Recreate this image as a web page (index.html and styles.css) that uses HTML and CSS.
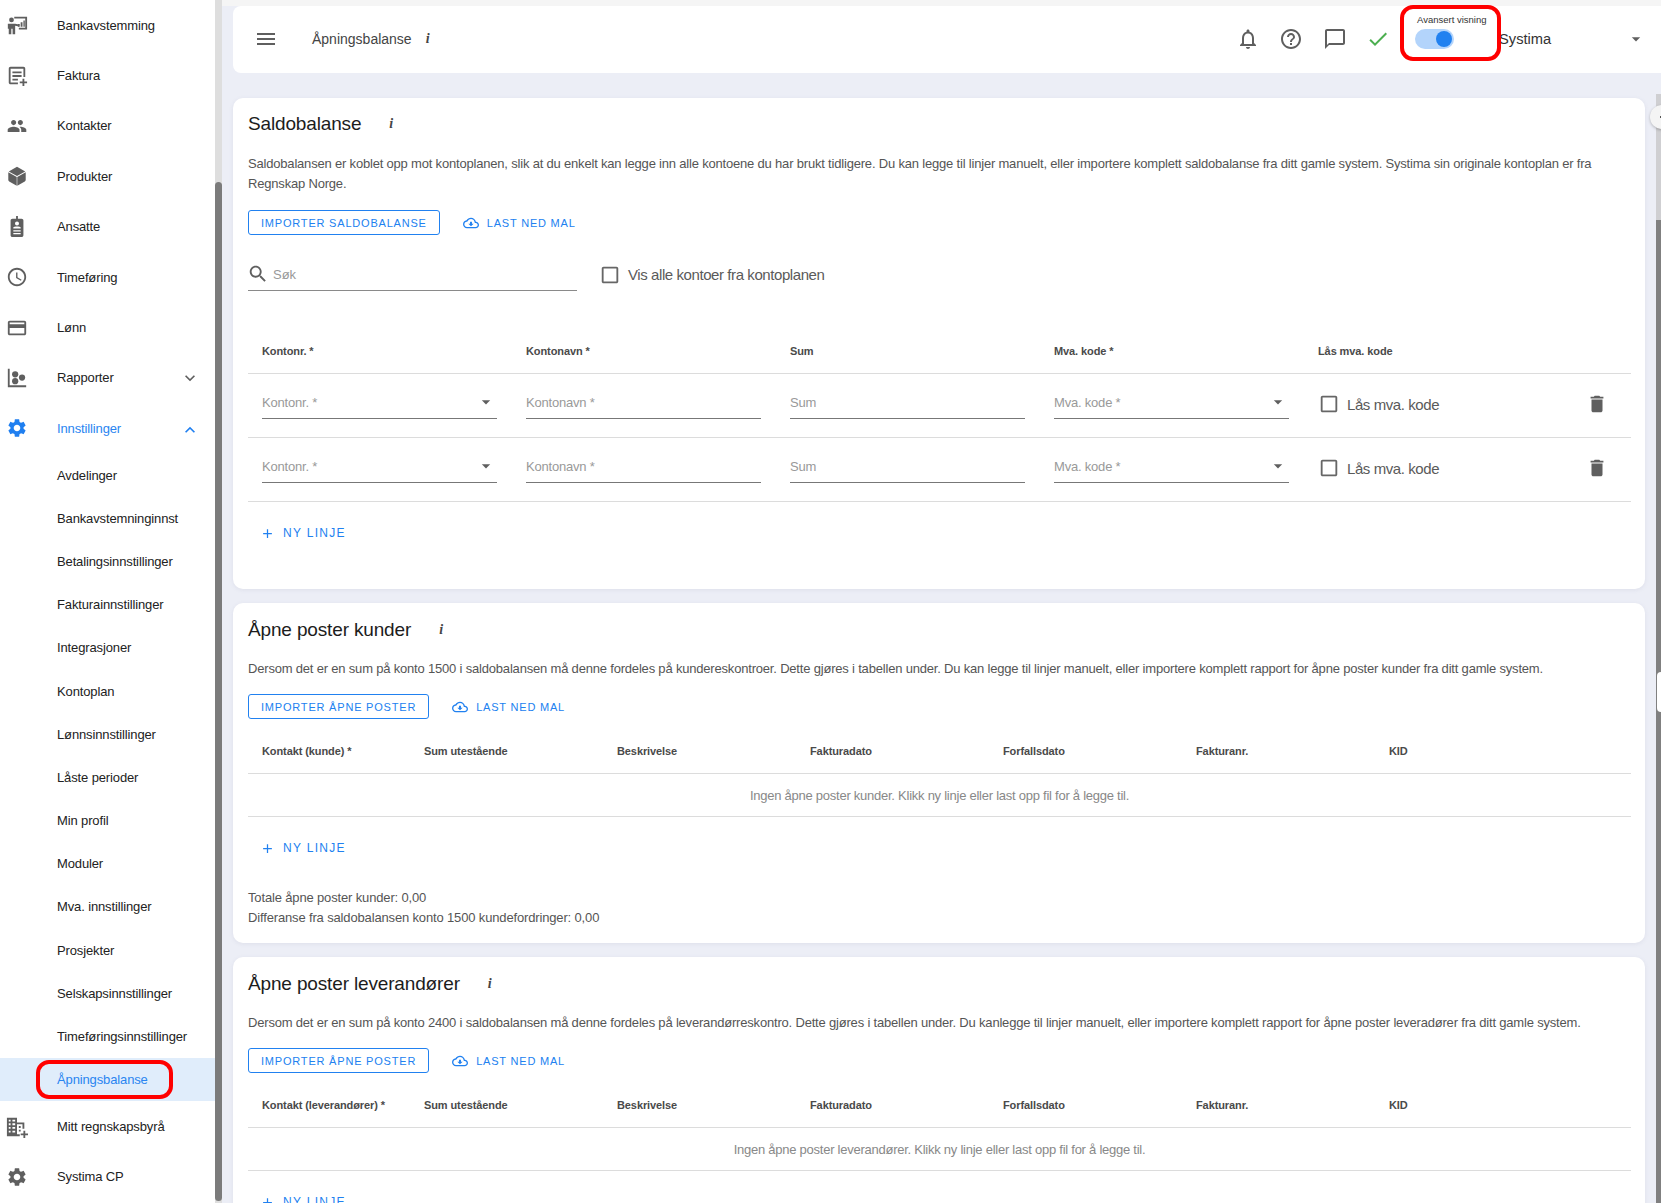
FILE: index.html
```html
<!DOCTYPE html>
<html lang="no">
<head>
<meta charset="utf-8">
<title>Åpningsbalanse</title>
<link rel="stylesheet" href="styles.css">
</head>
<body>
<svg class="defs" aria-hidden="true">
  <symbol id="i-bank" viewBox="0 0 24 24"><path d="M9 3h14v14h-9v-2h7V5H9z"/><path d="M13 11h2v3h-2zM16 9h2v5h-2zM19 7h1.500v7H19z"/><circle cx="6" cy="6.500" r="2.600"/><path d="M2 10.500h8l4 1v2l-4-.6V22H7.200v-6H5.800v6H3v-6H2z"/></symbol>
  <symbol id="i-invoice" viewBox="0 0 24 24"><path d="M5 2h14c1.100 0 2 .9 2 2v9h-2V4H5v15h8v2H5c-1.100 0-2-.9-2-2V4c0-1.100.9-2 2-2z"/><path d="M7 7h10v2H7zM7 11h10v2H7zM7 15h6v2H7zM18 15h2v3h3v2h-3v3h-2v-3h-3v-2h3z"/></symbol>
  <symbol id="i-people" viewBox="-1 -1 26 26"><path d="M16 11c1.660 0 2.990-1.340 2.990-3S17.660 5 16 5c-1.660 0-3 1.340-3 3s1.340 3 3 3zm-8 0c1.660 0 2.990-1.340 2.990-3S9.660 5 8 5C6.340 5 5 6.340 5 8s1.340 3 3 3zm0 2c-2.330 0-7 1.170-7 3.500V19h14v-2.500c0-2.330-4.670-3.500-7-3.500zm8 0c-.29 0-.62.02-.97.05 1.160.84 1.970 1.970 1.970 3.450V19h6v-2.500c0-2.330-4.670-3.500-7-3.500z"/></symbol>
  <symbol id="i-box" viewBox="0 0 24 24"><path d="M12 2l9 5-9 5-9-5z"/><path d="M2.500 8l9.200 5.100V22.500L3.500 18c-.6-.3-1-.9-1-1.600zM21.500 8l-9.200 5.100V22.500l8.200-4.500c.6-.3 1-.9 1-1.600z"/></symbol>
  <symbol id="i-badge" viewBox="0 0 24 24"><path fill-rule="evenodd" d="M11 0h2v3h4c1.100 0 2 .9 2 2v16c0 1.100-.9 2-2 2H7c-1.100 0-2-.9-2-2V5c0-1.100.9-2 2-2h4zm1 6a2.200 2.200 0 100 4.400A2.200 2.200 0 0012 6zM8 12.500v1.200h8v-1.200c0-.5-2.500-1-4-1s-4 .5-4 1zM8 15.500V17h8v-1.500zM8 18.500V20h8v-1.500z"/></symbol>
  <symbol id="i-clock" viewBox="0 0 24 24"><path d="M11.990 2C6.470 2 2 6.480 2 12s4.470 10 9.990 10C17.520 22 22 17.520 22 12S17.520 2 11.990 2zM12 20c-4.420 0-8-3.580-8-8s3.580-8 8-8 8 3.580 8 8-3.580 8-8 8z"/><path d="M12.500 7H11v6l5.250 3.150.75-1.230-4.500-2.670z"/></symbol>
  <symbol id="i-card" viewBox="0 0 24 24"><path d="M20 4H4c-1.110 0-1.990.89-1.990 2L2 18c0 1.110.89 2 2 2h16c1.110 0 2-.89 2-2V6c0-1.110-.89-2-2-2zm0 14H4v-6h16v6zm0-10H4V6h16v2z"/></symbol>
  <symbol id="i-bubble" viewBox="0 0 24 24"><path d="M2 2h2v18h18v2H2z"/><circle cx="10" cy="8" r="3.400"/><circle cx="10" cy="15.500" r="3.400"/><circle cx="17.500" cy="11.500" r="3.400"/></symbol>
  <symbol id="i-gear" viewBox="0 0 24 24"><path d="M19.140 12.940c.04-.3.060-.61.060-.94 0-.32-.02-.64-.07-.94l2.030-1.580c.18-.14.230-.41.120-.61l-1.920-3.320c-.12-.22-.37-.29-.59-.22l-2.390.96c-.5-.38-1.030-.7-1.620-.94l-.36-2.540c-.04-.24-.24-.41-.48-.41h-3.840c-.24 0-.43.17-.47.41l-.36 2.540c-.59.24-1.130.57-1.620.94l-2.390-.96c-.22-.08-.47 0-.59.22L2.740 8.870c-.12.21-.08.47.12.61l2.030 1.580c-.05.3-.09.63-.09.94s.02.64.07.94l-2.030 1.580c-.18.14-.23.41-.12.61l1.920 3.320c.12.22.37.29.59.22l2.390-.96c.5.38 1.030.7 1.620.94l.36 2.540c.05.24.24.41.48.41h3.840c.24 0 .44-.17.47-.41l.36-2.540c.59-.24 1.130-.56 1.620-.94l2.390.96c.22.08.47 0 .59-.22l1.920-3.320c.12-.22.070-.47-.12-.61l-2.010-1.580zM12 15.600c-1.980 0-3.600-1.620-3.600-3.600s1.620-3.600 3.600-3.600 3.600 1.620 3.600 3.600-1.620 3.600-3.600 3.600z"/></symbol>
  <symbol id="i-domain" viewBox="0 0 24 24"><path fill-rule="evenodd" d="M1 2h11v5h8v7h-2V9h-6v11h3v2H1zm2 2v2h2V4zm4 0v2h3V4zM3 8v2h2V8zm4 0v2h3V8zM3 12v2h2v-2zm4 0v2h3v-2zM3 16v2h2v-2zm4 0v2h3v-2zm7-5h2v2h-2zm0 4h2v2h-2z"/><path d="M19 16h2v3h3v2h-3v3h-2v-3h-3v-2h3z"/></symbol>
  <symbol id="i-menu" viewBox="0 0 24 24"><path d="M3 18h18v-2H3v2zm0-5h18v-2H3v2zm0-7v2h18V6H3z"/></symbol>
  <symbol id="i-bell" viewBox="0 0 24 24"><path d="M12 22c1.100 0 2-.9 2-2h-4c0 1.100.9 2 2 2zm6-6v-5c0-3.070-1.630-5.640-4.500-6.320V4c0-.83-.67-1.500-1.500-1.500s-1.500.67-1.500 1.500v.68C7.640 5.360 6 7.920 6 11v5l-2 2v1h16v-1l-2-2zm-2 1H8v-6c0-2.480 1.510-4.500 4-4.500s4 2.020 4 4.500v6z"/></symbol>
  <symbol id="i-help" viewBox="0 0 24 24"><path d="M11 18h2v-2h-2v2zm1-16C6.480 2 2 6.480 2 12s4.480 10 10 10 10-4.480 10-10S17.520 2 12 2zm0 18c-4.410 0-8-3.590-8-8s3.590-8 8-8 8 3.590 8 8-3.590 8-8 8zm0-14c-2.210 0-4 1.790-4 4h2c0-1.100.9-2 2-2s2 .9 2 2c0 2-3 1.750-3 5h2c0-2.250 3-2.500 3-5 0-2.210-1.790-4-4-4z"/></symbol>
  <symbol id="i-chat" viewBox="0 0 24 24"><path d="M20 2H4c-1.100 0-2 .9-2 2v18l4-4h14c1.100 0 2-.9 2-2V4c0-1.100-.9-2-2-2zm0 14H6l-2 2V4h16v12z"/></symbol>
  <symbol id="i-check" viewBox="0 0 24 24"><path d="M9 16.170L4.830 12l-1.420 1.410L9 19 21 7l-1.410-1.410z"/></symbol>
  <symbol id="i-cloud" viewBox="0 0 24 24"><path d="M19.350 10.040C18.670 6.590 15.640 4 12 4 9.110 4 6.600 5.640 5.350 8.040 2.340 8.360 0 10.910 0 14c0 3.310 2.690 6 6 6h13c2.760 0 5-2.240 5-5 0-2.640-2.050-4.780-4.650-4.960zM19 18H6c-2.210 0-4-1.790-4-4 0-2.050 1.530-3.760 3.560-3.970l1.070-.11.5-.95C8.080 7.140 9.940 6 12 6c2.620 0 4.880 1.860 5.390 4.430l.3 1.500 1.530.11c1.560.1 2.780 1.410 2.780 2.960 0 1.650-1.350 3-3 3zm-5.550-8h-2.900v3H8l4 4 4-4h-2.550z"/></symbol>
  <symbol id="i-search" viewBox="0 0 24 24"><path d="M15.500 14h-.79l-.28-.27C15.410 12.590 16 11.110 16 9.500 16 5.910 13.090 3 9.500 3S3 5.910 3 9.500 5.910 16 9.500 16c1.610 0 3.090-.59 4.230-1.570l.27.28v.79l5 4.990L20.490 19l-4.990-5zm-6 0C7.010 14 5 11.990 5 9.500S7.010 5 9.500 5 14 7.010 14 9.500 11.990 14 9.500 14z"/></symbol>
  <symbol id="i-checkbox" viewBox="0 0 24 24"><path d="M19 5v14H5V5h14m0-2H5c-1.100 0-2 .9-2 2v14c0 1.100.9 2 2 2h14c1.100 0 2-.9 2-2V5c0-1.100-.9-2-2-2z"/></symbol>
  <symbol id="i-delete" viewBox="0 0 24 24"><path d="M6 19c0 1.100.9 2 2 2h8c1.100 0 2-.9 2-2V7H6v12zM19 4h-3.500l-1-1h-5l-1 1H5v2h14V4z"/></symbol>
  <symbol id="i-add" viewBox="0 0 24 24"><path d="M19 13h-6v6h-2v-6H5v-2h6V5h2v6h6v2z"/></symbol>
  <symbol id="i-caret" viewBox="0 0 24 24"><path d="M7 10l5 5 5-5z"/></symbol>
  <symbol id="i-more" viewBox="0 0 24 24"><path d="M16.590 8.590L12 13.170 7.410 8.590 6 10l6 6 6-6z"/></symbol>
  <symbol id="i-less" viewBox="0 0 24 24"><path d="M12 8l-6 6 1.410 1.410L12 10.830l4.590 4.580L18 14z"/></symbol>
</svg>

<div class="app">
  <nav class="sidebar">
    <a class="nav-item"><svg class="nav-icon"><use href="#i-bank"/></svg><span>Bankavstemming</span></a>
    <a class="nav-item"><svg class="nav-icon"><use href="#i-invoice"/></svg><span>Faktura</span></a>
    <a class="nav-item"><svg class="nav-icon"><use href="#i-people"/></svg><span>Kontakter</span></a>
    <a class="nav-item"><svg class="nav-icon"><use href="#i-box"/></svg><span>Produkter</span></a>
    <a class="nav-item"><svg class="nav-icon"><use href="#i-badge"/></svg><span>Ansatte</span></a>
    <a class="nav-item"><svg class="nav-icon"><use href="#i-clock"/></svg><span>Timeføring</span></a>
    <a class="nav-item"><svg class="nav-icon"><use href="#i-card"/></svg><span>Lønn</span></a>
    <a class="nav-item"><svg class="nav-icon"><use href="#i-bubble"/></svg><span>Rapporter</span><svg class="chevron"><use href="#i-more"/></svg></a>
    <a class="nav-item is-open"><svg class="nav-icon"><use href="#i-gear"/></svg><span>Innstillinger</span><svg class="chevron"><use href="#i-less"/></svg></a>
    <a class="sub-item">Avdelinger</a>
    <a class="sub-item">Bankavstemninginnst</a>
    <a class="sub-item">Betalingsinnstillinger</a>
    <a class="sub-item">Fakturainnstillinger</a>
    <a class="sub-item">Integrasjoner</a>
    <a class="sub-item">Kontoplan</a>
    <a class="sub-item">Lønnsinnstillinger</a>
    <a class="sub-item">Låste perioder</a>
    <a class="sub-item">Min profil</a>
    <a class="sub-item">Moduler</a>
    <a class="sub-item">Mva. innstillinger</a>
    <a class="sub-item">Prosjekter</a>
    <a class="sub-item">Selskapsinnstillinger</a>
    <a class="sub-item">Timeføringsinnstillinger</a>
    <a class="sub-item is-active">Åpningsbalanse<span class="mark mark-nav"></span></a>
    <a class="nav-item"><svg class="nav-icon"><use href="#i-domain"/></svg><span>Mitt regnskapsbyrå</span></a>
    <a class="nav-item"><svg class="nav-icon"><use href="#i-gear"/></svg><span>Systima CP</span></a>
  </nav>
  <div class="side-scroll"><div class="side-thumb"></div></div>

  <main class="main">
    <header class="topbar">
      <svg class="top-menu"><use href="#i-menu"/></svg>
      <h1 class="page-title">Åpningsbalanse</h1>
      <span class="info info-top">i</span>
      <div class="top-actions">
        <svg class="top-icon"><use href="#i-bell"/></svg>
        <svg class="top-icon"><use href="#i-help"/></svg>
        <svg class="top-icon"><use href="#i-chat"/></svg>
        <svg class="top-icon top-check"><use href="#i-check"/></svg>
      </div>
      <div class="adv">
        <div class="adv-label">Avansert visning</div>
        <div class="toggle"><span class="toggle-knob"></span></div>
        <span class="mark mark-top"></span>
      </div>
      <div class="company">Systima</div>
      <svg class="company-caret"><use href="#i-caret"/></svg>
    </header>

    <div class="content">
      <section class="card card-first">
        <div class="card-head"><h2 class="card-title">Saldobalanse</h2><span class="info">i</span></div>
        <p class="card-text">Saldobalansen er koblet opp mot kontoplanen, slik at du enkelt kan legge inn alle kontoene du har brukt tidligere. Du kan legge til linjer manuelt, eller importere komplett saldobalanse fra ditt gamle system. Systima sin originale kontoplan er fra Regnskap Norge.</p>
        <div class="actions">
          <button class="btn-outline">Importer saldobalanse</button>
          <button class="btn-text"><svg class="btn-icon"><use href="#i-cloud"/></svg>Last ned mal</button>
        </div>
        <div class="filter">
          <div class="search"><svg class="search-icon"><use href="#i-search"/></svg><span>Søk</span></div>
          <label class="check-label check-all"><svg class="check-box"><use href="#i-checkbox"/></svg>Vis alle kontoer fra kontoplanen</label>
        </div>
        <div class="grid-balance thead">
          <div>Kontonr. *</div><div>Kontonavn *</div><div>Sum</div><div>Mva. kode *</div><div>Lås mva. kode</div>
        </div>
        <div class="grid-balance trow">
          <div class="field">Kontonr. *<svg class="field-caret"><use href="#i-caret"/></svg></div>
          <div class="field">Kontonavn *</div>
          <div class="field">Sum</div>
          <div class="field">Mva. kode *<svg class="field-caret"><use href="#i-caret"/></svg></div>
          <div class="lock"><label class="check-label"><svg class="check-box"><use href="#i-checkbox"/></svg>Lås mva. kode</label><svg class="trash"><use href="#i-delete"/></svg></div>
        </div>
        <div class="grid-balance trow">
          <div class="field">Kontonr. *<svg class="field-caret"><use href="#i-caret"/></svg></div>
          <div class="field">Kontonavn *</div>
          <div class="field">Sum</div>
          <div class="field">Mva. kode *<svg class="field-caret"><use href="#i-caret"/></svg></div>
          <div class="lock"><label class="check-label"><svg class="check-box"><use href="#i-checkbox"/></svg>Lås mva. kode</label><svg class="trash"><use href="#i-delete"/></svg></div>
        </div>
        <button class="btn-add"><svg class="add-icon"><use href="#i-add"/></svg>Ny linje</button>
      </section>

      <section class="card">
        <div class="card-head"><h2 class="card-title">Åpne poster kunder</h2><span class="info">i</span></div>
        <p class="card-text">Dersom det er en sum på konto 1500 i saldobalansen må denne fordeles på kundereskontroer. Dette gjøres i tabellen under. Du kan legge til linjer manuelt, eller importere komplett rapport for åpne poster kunder fra ditt gamle system.</p>
        <div class="actions">
          <button class="btn-outline">Importer åpne poster</button>
          <button class="btn-text"><svg class="btn-icon"><use href="#i-cloud"/></svg>Last ned mal</button>
        </div>
        <div class="grid-open thead thead-open">
          <div>Kontakt (kunde) *</div><div>Sum utestående</div><div>Beskrivelse</div><div>Fakturadato</div><div>Forfallsdato</div><div>Fakturanr.</div><div>KID</div>
        </div>
        <div class="empty">Ingen åpne poster kunder. Klikk ny linje eller last opp fil for å legge til.</div>
        <button class="btn-add"><svg class="add-icon"><use href="#i-add"/></svg>Ny linje</button>
        <p class="totals">Totale åpne poster kunder: 0,00<br>Differanse fra saldobalansen konto 1500 kundefordringer: 0,00</p>
      </section>

      <section class="card">
        <div class="card-head"><h2 class="card-title">Åpne poster leverandører</h2><span class="info">i</span></div>
        <p class="card-text">Dersom det er en sum på konto 2400 i saldobalansen må denne fordeles på leverandørreskontro. Dette gjøres i tabellen under. Du kanlegge til linjer manuelt, eller importere komplett rapport for åpne poster leveradører fra ditt gamle system.</p>
        <div class="actions">
          <button class="btn-outline">Importer åpne poster</button>
          <button class="btn-text"><svg class="btn-icon"><use href="#i-cloud"/></svg>Last ned mal</button>
        </div>
        <div class="grid-open thead thead-open">
          <div>Kontakt (leverandører) *</div><div>Sum utestående</div><div>Beskrivelse</div><div>Fakturadato</div><div>Forfallsdato</div><div>Fakturanr.</div><div>KID</div>
        </div>
        <div class="empty">Ingen åpne poster leverandører. Klikk ny linje eller last opp fil for å legge til.</div>
        <button class="btn-add"><svg class="add-icon"><use href="#i-add"/></svg>Ny linje</button>
      </section>
    </div>

    <div class="page-scroll"><div class="page-thumb"></div></div>
    <div class="float-round"></div>
    <div class="float-tab"></div>
  </main>
</div>
</body>
</html>
```

FILE: styles.css
```css
* { box-sizing: border-box; }
html, body { margin: 0; height: 1203px; overflow: hidden; }
body { font-family: "Liberation Sans", Arial, sans-serif; background: #eceef6; color: #222; }
.defs { display: none; }
svg { fill: currentColor; flex: none; }

.app { display: flex; height: 1203px; }

/* Sidebar */
.sidebar { width: 215px; flex: none; background: #fff; font-size: 13px; letter-spacing: -.13px; color: #222; }
.nav-item { display: flex; align-items: center; height: 50.4px; position: relative; }
.nav-icon { width: 22px; height: 22px; margin: 0 29px 0 6px; color: #5f5f5f; }
.nav-item.is-open { color: #2a85f1; }
.nav-item.is-open .nav-icon { color: #1f7ff0; }
.chevron { width: 20px; height: 20px; margin-left: auto; margin-right: 15px; color: #5f5f5f; }
.is-open .chevron { color: #1f7ff0; margin-top: 3px; }
.sub-item { display: flex; align-items: center; height: 43.2px; padding-left: 57px; position: relative; }
.sub-item.is-active { background: #e0edfb; color: #2a85f1; }
.side-scroll { width: 7px; flex: none; background: #dedede; padding-top: 182px; }
.side-thumb { height: 1019px; background: #7b7b7b; border-radius: 4px; }

/* Red annotation frames */
.mark { position: absolute; border: 4px solid #f00; border-radius: 13px; pointer-events: none; }
.mark-nav { left: 36px; top: 2px; width: 137px; height: 39px; }
.mark-top { left: 0; top: 0; width: 101px; height: 56px; }

/* Main */
.main { flex: 1; min-width: 0; padding: 6px 0 0 11px; position: relative; background: linear-gradient(#f5f5f5 6px, #eceef6 6px); }

.topbar { height: 67px; padding-bottom: 1px; background: #fff; border-radius: 8px 0 0 8px; display: flex; align-items: center; color: #444; }
.top-menu { width: 24px; height: 24px; margin-left: 21px; color: #5f5f5f; }
.page-title { margin: 0 0 0 34px; font-size: 14px; font-weight: 400; color: #444; }
.info { font-family: "Liberation Serif", serif; font-style: italic; font-weight: 700; font-size: 14px; color: #444; }
.info-top { margin-left: 14px; }
.top-actions { display: flex; gap: 19.300px; margin-left: auto; }
.top-icon { width: 24px; height: 24px; color: #5f5f5f; }
.top-check { color: #4caf50; }
.adv { width: 101px; height: 56px; margin-left: 10px; align-self: flex-start; margin-top: -1px; position: relative; padding: 10px 0 0 17px; }
.adv-label { font-size: 9.500px; line-height: 10px; color: #333; white-space: nowrap; }
.toggle { width: 39px; height: 20px; margin: 4px 0 0 -2px; background: #b3d4fb; border-radius: 10px; display: flex; align-items: center; justify-content: flex-end; padding-right: 2px; }
.toggle-knob { width: 16px; height: 16px; background: #2181f0; border-radius: 50%; }
.company { width: 127px; font-size: 14.700px; color: #333; margin-left: -2px; margin-top: -1px; }
.company-caret { width: 20px; height: 20px; margin-right: 15px; color: #5f5f5f; }

.content { display: flex; flex-direction: column; gap: 14px; margin: 25px 16px 0 0; }
.card { background: #fff; border-radius: 10px; padding: 15px 14px 15px 15px; box-shadow: 0 1px 4px rgba(120, 125, 160, .12); }
.card-first { padding-bottom: 41px; padding-top: 14px; }
.card-first .card-text { margin-top: 18px; }
.card-head { display: flex; align-items: center; height: 24px; }
.card-title { margin: 0; font-size: 19px; font-weight: 400; letter-spacing: -.15px; color: #1c1c1c; }
.card-head .info { margin-left: 28px; }
.card-text { margin: 17px 0 0; font-size: 13px; line-height: 20px; letter-spacing: -.19px; color: #555; }

.actions { display: flex; align-items: center; margin-top: 15px; }
.card-first .actions { margin-top: 16px; }
button { font: inherit; background: none; cursor: pointer; }
.btn-outline, .btn-text, .btn-add { text-transform: uppercase; color: #2181f0; letter-spacing: .8px; font-size: 11px; font-weight: 400; }
.btn-outline { height: 25px; padding: 0 12px; border: 1px solid #2181f0; border-radius: 3px; }
.btn-text { border: 0; padding: 0; margin-left: 23px; display: flex; align-items: center; height: 25px; }
.btn-icon { width: 16px; height: 16px; margin-right: 8px; }

.filter { display: flex; align-items: center; margin-top: 23px; }
.search { width: 329px; height: 33px; border-bottom: 1px solid #8a8a8a; display: flex; align-items: center; gap: 4px; font-size: 13px; color: #999; }
.search-icon { width: 22px; height: 22px; margin-left: -1px; color: #5f5f5f; }
.check-label { display: flex; align-items: center; gap: 7px; font-size: 15px; letter-spacing: -.42px; color: #5a5a5a; }
.check-all { margin-left: 22px; }
.check-box { width: 22px; height: 22px; color: #666; }

.grid-balance { display: grid; grid-template-columns: repeat(4, 264px) 1fr; padding-left: 14px; border-bottom: 1px solid #dcdcdc; }
.grid-open { display: grid; grid-template-columns: 162px repeat(6, 193px); padding-left: 14px; border-bottom: 1px solid #dcdcdc; }
.thead { height: 44px; padding-bottom: 1px; margin-top: 39px; align-items: center; font-size: 11px; font-weight: 700; letter-spacing: -.1px; color: #4a4a4a; white-space: nowrap; }
.thead-open { margin-top: 11px; }
.trow { height: 64px; padding-top: 14px; align-items: start; }
.field { width: 235px; height: 31px; border-bottom: 1px solid #777; font-size: 13px; line-height: 30px; letter-spacing: -.2px; color: #999; display: flex; justify-content: space-between; align-items: center; }
.field-caret { width: 20px; height: 20px; color: #5f5f5f; margin-top: -2px; margin-right: 1px; }
.lock { display: flex; align-items: center; justify-content: space-between; height: 32px; padding-right: 23px; }
.trash { width: 22px; height: 22px; color: #5f5f5f; }

.btn-add { display: flex; align-items: center; height: 30px; margin: 16px 0 0 12px; padding: 0; border: 0; font-size: 12px; letter-spacing: 1.300px; }
.add-icon { width: 15px; height: 15px; margin-right: 8px; }

.empty { height: 43px; border-bottom: 1px solid #dcdcdc; display: flex; align-items: center; justify-content: center; font-size: 13px; letter-spacing: -.25px; color: #888; }
.totals { margin: 25px 0 0; font-size: 13px; line-height: 20px; letter-spacing: -.15px; color: #555; }

/* Right-hand overlay */
.page-scroll { position: absolute; top: 94px; right: 0; bottom: 0; width: 5px; background: #cfcfd2; }
.page-thumb { margin-top: 126px; height: 983px; background: #808080; }
.float-round { position: absolute; top: 105px; right: -13px; width: 24px; height: 24px; border-radius: 50%; background: #f4f4f4; box-shadow: 0 1px 3px rgba(0, 0, 0, .25); display: flex; align-items: center; padding-left: 10px; }
.float-round::after { content: ""; width: 2px; height: 2px; border-radius: 50%; background: #222; }
.float-tab { position: absolute; top: 672px; right: 0; width: 4px; height: 40px; background: #fff; border-radius: 4px 0 0 4px; }
```
